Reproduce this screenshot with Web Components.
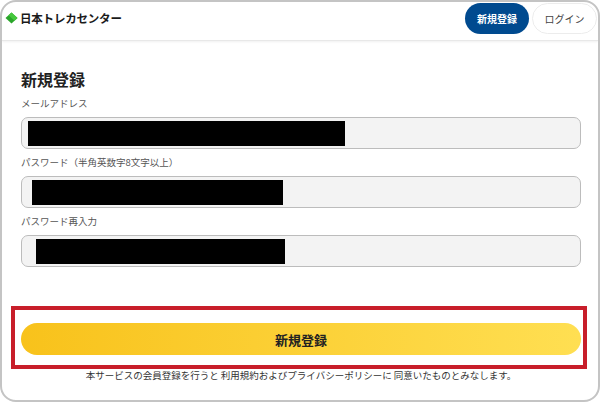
<!DOCTYPE html>
<html lang="ja">
<head>
<meta charset="UTF-8">
<title>新規登録</title>
<style>
  html, body { margin: 0; height: 100%; background: #fff; }
  body { font-family: "Noto Sans CJK JP", "Noto Sans", sans-serif; color: #222; }
</style>
</head>
<body>
<signup-page>
  <site-header slot="header"></site-header>
  <h-title slot="title">新規登録</h-title>
  <form-field slot="fields" label="メールアドレス" mask-left="6" mask-width="317"></form-field>
  <form-field slot="fields" label="パスワード（半角英数字8文字以上）" mask-left="10" mask-width="251"></form-field>
  <form-field slot="fields" label="パスワード再入力" mask-left="14" mask-width="249"></form-field>
  <submit-button slot="action">新規登録</submit-button>
  <span slot="note">本サービスの会員登録を行うと 利用規約およびプライバシーポリシーに 同意いたものとみなします。</span>
</signup-page>

<script>
  // Outer rounded frame, header on top, form below
  class SignupPage extends HTMLElement {
    constructor() {
      super();
      this.attachShadow({ mode: 'open' });
      this.shadowRoot.innerHTML = `
        <style>
          :host {
            display: flex;
            flex-direction: column;
            box-sizing: border-box;
            width: 600px;
            height: 402px;
            border: 2px solid #c4c4c4;
            border-radius: 16px;
            overflow: hidden;
            background: #fff;
          }
          main {
            display: flex;
            flex-direction: column;
            padding: 27px 17px 0 19px;
          }
          .box {
            margin: 33px 0 0 -10px;
            width: 576px;
            height: 63px;
            box-sizing: border-box;
            border: 4px solid #c81e2a;
            padding: 13px 2px 0 6px;
          }
          .note {
            text-align: center;
            font-size: 9.5px;
            line-height: 12px;
            color: #333;
          }
        </style>
        <slot name="header"></slot>
        <main>
          <slot name="title"></slot>
          <slot name="fields"></slot>
          <div class="box"><slot name="action"></slot></div>
          <div class="note"><slot name="note"></slot></div>
        </main>
      `;
    }
  }

  class SiteHeader extends HTMLElement {
    constructor() {
      super();
      this.attachShadow({ mode: 'open' });
      this.shadowRoot.innerHTML = `
        <style>
          :host {
            display: flex;
            align-items: flex-start;
            justify-content: space-between;
            box-sizing: border-box;
            height: 39px;
            padding: 1px 1px 0 3px;
            border-bottom: 1px solid #e8e8e8;
            box-shadow: 0 1px 2px #f0f0f0;
          }
          .logo {
            display: flex;
            align-items: center;
            gap: 2px;
            height: 30px;
            font-size: 11.5px;
            font-weight: 700;
            color: #1a1a1a;
            letter-spacing: -0.2px;
          }
          svg { display: block; }
          nav { display: flex; gap: 3px; }
          .btn {
            display: flex;
            align-items: center;
            justify-content: center;
            box-sizing: border-box;
            height: 31px;
            border-radius: 16px;
            font-size: 10px;
          }
          .signup { width: 64px; background: #004a8f; color: #fff; font-weight: 700; }
          .login { width: 65px; background: #fff; border: 1px solid #ececec; color: #444; }
        </style>
        <div class="logo">
          <svg width="13" height="12" viewBox="0 0 13 12">
            <path d="M6.500 .5 12.500 6 6.500 11.500.5 6Z" fill="#2ba52b"/>
            <path d="M3.500 3.200 6.500 .5 12.500 6 9.500 8.800Z" fill="#45c83c"/>
          </svg>
          <span>日本トレカセンター</span>
        </div>
        <nav>
          <div class="btn signup">新規登録</div>
          <div class="btn login">ログイン</div>
        </nav>
      `;
    }
  }

  class HTitle extends HTMLElement {
    constructor() {
      super();
      this.attachShadow({ mode: 'open' });
      this.shadowRoot.innerHTML = `
        <style>
          :host {
            display: block;
            font-size: 16px;
            font-weight: 700;
            line-height: 22px;
            color: #222;
            margin-bottom: 6px;
          }
        </style>
        <slot></slot>
      `;
    }
  }

  // Label + grey input; the black mask hides what was typed
  class FormField extends HTMLElement {
    constructor() {
      super();
      this.attachShadow({ mode: 'open' });
      const left = this.getAttribute('mask-left');
      const width = this.getAttribute('mask-width');
      this.shadowRoot.innerHTML = `
        <style>
          :host { display: block; margin-bottom: 6px; }
          label {
            display: block;
            font-size: 9.5px;
            line-height: 14px;
            color: #555;
            padding-bottom: 7px;
          }
          .input {
            position: relative;
            box-sizing: border-box;
            width: 560px;
            height: 32px;
            background: #f3f3f3;
            border: 1px solid #bcbcbc;
            border-radius: 7px;
          }
          .mask {
            position: absolute;
            top: 3px;
            height: 25px;
            background: #000;
          }
        </style>
        <label>${this.getAttribute('label')}</label>
        <div class="input"><div class="mask" style="left:${left}px;width:${width}px"></div></div>
      `;
    }
  }

  class SubmitButton extends HTMLElement {
    constructor() {
      super();
      this.attachShadow({ mode: 'open' });
      this.shadowRoot.innerHTML = `
        <style>
          :host {
            display: flex;
            align-items: center;
            justify-content: center;
            height: 32px;
            border-radius: 16px;
            background: linear-gradient(90deg, #f8c21b, #ffdf52);
            font-size: 13px;
            font-weight: 700;
            color: #222;
          }
        </style>
        <slot></slot>
      `;
    }
  }

  customElements.define('signup-page', SignupPage);
  customElements.define('site-header', SiteHeader);
  customElements.define('h-title', HTitle);
  customElements.define('form-field', FormField);
  customElements.define('submit-button', SubmitButton);
</script>
</body>
</html>
